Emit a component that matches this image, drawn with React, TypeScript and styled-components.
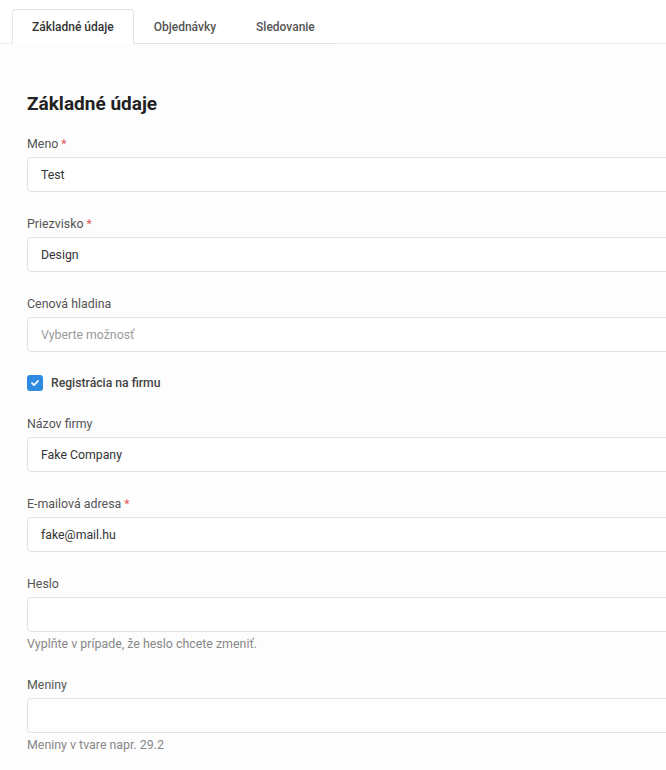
import React from "react";
import styled, { createGlobalStyle } from "styled-components";

const Global = createGlobalStyle`
  html, body {
    margin: 0;
    padding: 0;
    overflow: hidden;
    background: #fdfdfd;
    font-family: Roboto, "Liberation Sans", Arial, sans-serif;
  }
  * { box-sizing: border-box; }
`;

const Header = styled.div`
  background: #fff;
  padding: 9px 0 0 12px;
  border-bottom: 1px solid #eeeeee;
`;

const TabList = styled.div`
  display: flex;
  width: fit-content;
  border-bottom: 1px solid #e4e4e4;
  margin-bottom: -1px;
`;

const Tab = styled.div<{ $active?: boolean }>`
  flex-shrink: 0;
  white-space: nowrap;
  height: 35px;
  padding: 0 19px;
  display: flex;
  align-items: center;
  font-size: 12px;
  font-weight: 500;
  color: ${(p) => (p.$active ? "#333" : "#555")};
  background: ${(p) => (p.$active ? "#fff" : "transparent")};
  border: 1px solid ${(p) => (p.$active ? "#e4e4e4" : "transparent")};
  border-bottom-color: ${(p) => (p.$active ? "#fff" : "transparent")};
  border-radius: 4px 4px 0 0;
  margin-bottom: -1px;
`;

const Content = styled.div`
  padding: 46px 0 0 27px;
  width: 760px;
`;

const Title = styled.h2`
  margin: 0 0 17px;
  font-size: 19px;
  line-height: 27px;
  font-weight: 700;
  color: #222;
`;

const Field = styled.div`
  margin-bottom: 22px;
`;

const Label = styled.label`
  display: block;
  font-size: 12.4px;
  line-height: 20px;
  color: #555;
  margin-bottom: 3px;
`;

const Star = styled.span`
  color: #e35d5d;
  margin-left: 3px;
`;

const Input = styled.div<{ $placeholder?: boolean }>`
  height: 35px;
  width: 100%;
  border: 1px solid #e3e3e3;
  border-radius: 4px;
  background: #fff;
  padding: 0 13px;
  display: flex;
  align-items: center;
  font-size: 12.3px;
  color: ${(p) => (p.$placeholder ? "#9a9a9a" : "#333")};
`;

const Help = styled.div`
  font-size: 12.4px;
  line-height: 18px;
  color: #888;
  margin-top: 3px;
  margin-bottom: 2px;
`;

const CheckRow = styled.div`
  display: flex;
  align-items: center;
  gap: 8px;
  height: 18px;
  margin-bottom: 22px;
`;

const Box = styled.span`
  width: 16px;
  height: 16px;
  border-radius: 3px;
  background: #2f8ae2;
  display: flex;
  align-items: center;
  justify-content: center;
`;

const CheckLabel = styled.span`
  font-size: 12.2px;
  font-weight: 500;
  color: #444;
`;

type F = { label: string; value?: string; placeholder?: string; required?: boolean; help?: string };

const fieldsA: F[] = [
  { label: "Meno", value: "Test", required: true },
  { label: "Priezvisko", value: "Design", required: true },
  { label: "Cenová hladina", placeholder: "Vyberte možnosť" },
];

const fieldsB: F[] = [
  { label: "Názov firmy", value: "Fake Company" },
  { label: "E-mailová adresa", value: "fake@mail.hu", required: true },
  { label: "Heslo", value: "", help: "Vyplňte v prípade, že heslo chcete zmeniť." },
  { label: "Meniny", value: "", help: "Meniny v tvare napr. 29.2" },
];

const FieldView = ({ f }: { f: F }) => (
  <Field>
    <Label>
      {f.label}
      {f.required && <Star>*</Star>}
    </Label>
    <Input $placeholder={!!f.placeholder}>{f.placeholder ?? f.value}</Input>
    {f.help && <Help>{f.help}</Help>}
  </Field>
);

export default function App() {
  return (
    <>
      <Global />
      <Header>
        <TabList>
          <Tab $active>Základné údaje</Tab>
          <Tab>Objednávky</Tab>
          <Tab>Sledovanie</Tab>
        </TabList>
      </Header>
      <Content>
        <Title>Základné údaje</Title>
        {fieldsA.map((f) => (
          <FieldView key={f.label} f={f} />
        ))}
        <CheckRow>
          <Box>
            <svg width="10" height="10" viewBox="0 0 10 10">
              <path d="M2 5.2 L4.1 7.2 L8 3" stroke="#fff" strokeWidth="1.8" fill="none" strokeLinecap="round" strokeLinejoin="round" />
            </svg>
          </Box>
          <CheckLabel>Registrácia na firmu</CheckLabel>
        </CheckRow>
        {fieldsB.map((f) => (
          <FieldView key={f.label} f={f} />
        ))}
      </Content>
    </>
  );
}
